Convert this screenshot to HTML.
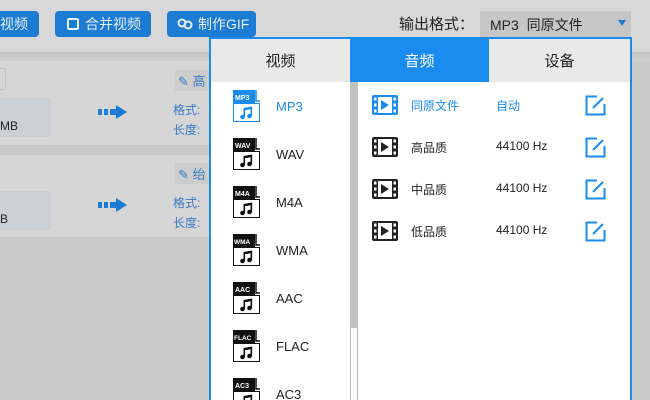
<!DOCTYPE html>
<html><head><meta charset="utf-8"><style>
*{margin:0;padding:0;box-sizing:border-box}
html{width:650px;height:400px;overflow:hidden}
body{width:650px;height:400px;overflow:hidden;position:relative;background:#c9c9c9;font-family:"Liberation Sans","Noto Sans CJK SC",sans-serif}
.a{position:absolute}
.btn{position:absolute;top:11px;height:26px;background:#1c7bd2;border-radius:4px;color:#e6eef8;font-size:14px;line-height:26px}
.lbl{font-size:12px;color:#3a7bc8}
.item{position:absolute;left:22px;width:120px;height:34px}
.item svg{position:absolute;left:0;top:0}
.item span{position:absolute;left:43px;top:9px;font-size:13px;color:#222}
.row{position:absolute;left:149px;width:270px;height:24px;font-size:12px;color:#222}
.row svg{position:absolute}
</style></head><body>
<svg width="0" height="0" style="position:absolute"><defs>
<g id="note"><circle cx="9.5" cy="27" r="2.3"/><circle cx="16.5" cy="26" r="2.3"/><rect x="10.5" y="18" width="1.6" height="9"/><rect x="17.5" y="17" width="1.6" height="9"/><polygon points="10.5,18 19.1,16.5 19.1,19 10.5,20.5"/></g>
</defs></svg>
<!-- top bar -->
<div class="a" style="left:0;top:0;width:650px;height:52px;background:#d8d8d8"></div>
<div class="a" style="left:0;top:52px;width:650px;height:9px;background:linear-gradient(#c2c2c2,#cfcfcf)"></div>
<div class="btn" style="left:-4px;width:43px;padding-left:4px">视频</div>
<div class="btn" style="left:55px;width:96px;padding-left:12px"><span style="display:inline-block;width:12px;height:12px;border:2px solid #e6eef8;border-radius:2px;vertical-align:-1px;margin-right:6px"></span>合并视频</div>
<div class="btn" style="left:167px;width:89px;padding-left:10px"><svg width="16" height="12" style="vertical-align:-1px;margin-right:5px"><circle cx="5" cy="5" r="3.5" fill="none" stroke="#e6eef8" stroke-width="2"/><circle cx="11" cy="7" r="3.5" fill="none" stroke="#e6eef8" stroke-width="2"/></svg>制作GIF</div>
<div class="a" style="left:399px;top:13px;font-size:15px;color:#222">输出格式：</div>
<div class="a" style="left:480px;top:11px;width:151px;height:26px;background:#c6c6c6"></div>
<div class="a" style="left:490px;top:15px;font-size:14px;color:#222">MP3&nbsp; 同原文件</div>
<div class="a" style="left:618px;top:20px;width:0;height:0;border-left:4px solid transparent;border-right:4px solid transparent;border-top:6px solid #1c7bd2"></div>
<!-- rows -->
<div class="a" style="left:0;top:61px;width:215px;height:84px;background:#d6d6d6"></div>
<div class="a" style="left:0;top:145px;width:215px;height:10px;background:#c8c8c8"></div>
<div class="a" style="left:0;top:155px;width:215px;height:82px;background:#d6d6d6"></div>
<div class="a" style="left:-6px;top:68px;width:12px;height:22px;border:1px solid #c4c4c4;border-radius:3px"></div>
<div class="a" style="left:0;top:98px;width:51px;height:39px;background:#cbd0d6"></div>
<div class="a" style="left:0;top:119px;font-size:12px;color:#222">MB</div>
<div class="a" style="left:0;top:191px;width:51px;height:39px;background:#cbd0d6"></div>
<div class="a" style="left:0;top:212px;font-size:12px;color:#222">B</div>
<svg class="a" style="left:97px;top:104px" width="31" height="16"><rect x="1" y="5" width="4" height="6" fill="#1c7bd2"/><rect x="7" y="5" width="4" height="6" fill="#1c7bd2"/><rect x="13" y="5" width="6" height="6" fill="#1c7bd2"/><path d="M19 1 L30 8 L19 15Z" fill="#1c7bd2"/></svg>
<svg class="a" style="left:97px;top:197px" width="31" height="16"><rect x="1" y="5" width="4" height="6" fill="#1c7bd2"/><rect x="7" y="5" width="4" height="6" fill="#1c7bd2"/><rect x="13" y="5" width="6" height="6" fill="#1c7bd2"/><path d="M19 1 L30 8 L19 15Z" fill="#1c7bd2"/></svg>
<div class="a" style="left:175px;top:70px;width:36px;height:21px;background:#cdcdcd"></div>
<div class="a" style="left:178px;top:71px;font-size:13px;color:#3a7bc8">✎ 高</div>
<div class="a lbl" style="left:173px;top:101px">格式:</div>
<div class="a lbl" style="left:173px;top:121px">长度:</div>
<div class="a" style="left:175px;top:163px;width:36px;height:21px;background:#cdcdcd"></div>
<div class="a" style="left:178px;top:164px;font-size:13px;color:#3a7bc8">✎ 绐</div>
<div class="a lbl" style="left:173px;top:194px">格式:</div>
<div class="a lbl" style="left:173px;top:214px">长度:</div>
<!-- popup -->
<div class="a" style="left:209px;top:37px;width:423px;height:370px;border:2px solid #1a8cf0;background:#fff">
 <div class="a" style="left:0;top:0;width:139px;height:43px;background:#e9e9e9;font-size:15px;color:#222;text-align:center;line-height:46px">视频</div>
 <div class="a" style="left:139px;top:0;width:139px;height:43px;background:#1a8cf0;font-size:15px;color:#fff;text-align:center;line-height:46px">音频</div>
 <div class="a" style="left:278px;top:0;width:141px;height:43px;background:#e9e9e9;font-size:15px;color:#222;text-align:center;line-height:46px">设备</div>
 <div class="a" style="left:139px;top:43px;width:8px;height:246px;background:#c2c2c2"></div>
 <div class="a" style="left:139px;top:289px;width:8px;height:80px;border-left:1px solid #bbb;border-right:1px solid #bbb"></div>
 <div class="item" style="top:51px"><svg width="28" height="33"><rect x="0.5" y="13.5" width="26" height="18" fill="#fff" stroke="#1a8cf0"/><rect x="0" y="0" width="22" height="13" fill="#1a8cf0"/><path d="M23 0 v11 h4" fill="none" stroke="#1a8cf0" stroke-width="1.5"/><text x="2" y="10" font-size="7" font-weight="bold" fill="#fff" font-family="Liberation Sans">MP3</text><use href="#note" fill="#1a8cf0"/></svg><span style="color:#1a8cf0">MP3</span></div>
 <div class="item" style="top:99px"><svg width="28" height="33"><rect x="0.5" y="13.5" width="26" height="18" fill="#fff" stroke="#111"/><rect x="0" y="0" width="22" height="13" fill="#111"/><path d="M23 0 v11 h4" fill="none" stroke="#111" stroke-width="1.5"/><text x="2" y="10" font-size="7" font-weight="bold" fill="#fff" font-family="Liberation Sans">WAV</text><use href="#note" fill="#111"/></svg><span>WAV</span></div>
 <div class="item" style="top:147px"><svg width="28" height="33"><rect x="0.5" y="13.5" width="26" height="18" fill="#fff" stroke="#111"/><rect x="0" y="0" width="22" height="13" fill="#111"/><path d="M23 0 v11 h4" fill="none" stroke="#111" stroke-width="1.5"/><text x="2" y="10" font-size="7" font-weight="bold" fill="#fff" font-family="Liberation Sans">M4A</text><use href="#note" fill="#111"/></svg><span>M4A</span></div>
 <div class="item" style="top:195px"><svg width="28" height="33"><rect x="0.5" y="13.5" width="26" height="18" fill="#fff" stroke="#111"/><rect x="0" y="0" width="22" height="13" fill="#111"/><path d="M23 0 v11 h4" fill="none" stroke="#111" stroke-width="1.5"/><text x="1" y="10" font-size="6.5" font-weight="bold" fill="#fff" font-family="Liberation Sans">WMA</text><use href="#note" fill="#111"/></svg><span>WMA</span></div>
 <div class="item" style="top:243px"><svg width="28" height="33"><rect x="0.5" y="13.5" width="26" height="18" fill="#fff" stroke="#111"/><rect x="0" y="0" width="22" height="13" fill="#111"/><path d="M23 0 v11 h4" fill="none" stroke="#111" stroke-width="1.5"/><text x="2" y="10" font-size="7" font-weight="bold" fill="#fff" font-family="Liberation Sans">AAC</text><use href="#note" fill="#111"/></svg><span>AAC</span></div>
 <div class="item" style="top:291px"><svg width="28" height="33"><rect x="0.5" y="13.5" width="26" height="18" fill="#fff" stroke="#111"/><rect x="0" y="0" width="22" height="13" fill="#111"/><path d="M23 0 v11 h4" fill="none" stroke="#111" stroke-width="1.5"/><text x="1" y="10" font-size="6.5" font-weight="bold" fill="#fff" font-family="Liberation Sans">FLAC</text><use href="#note" fill="#111"/></svg><span>FLAC</span></div>
 <div class="item" style="top:339px"><svg width="28" height="33"><rect x="0.5" y="13.5" width="26" height="18" fill="#fff" stroke="#111"/><rect x="0" y="0" width="22" height="13" fill="#111"/><path d="M23 0 v11 h4" fill="none" stroke="#111" stroke-width="1.5"/><text x="2" y="10" font-size="7" font-weight="bold" fill="#fff" font-family="Liberation Sans">AC3</text><use href="#note" fill="#111"/></svg><span>AC3</span></div>
 <!-- right rows -->
 <div class="row" style="top:55px;color:#1a8cf0"><svg style="left:12px;top:1px" width="26" height="20"><rect x="0" y="0" width="26" height="20" rx="2" fill="#1a8cf0"/><rect x="6" y="2" width="14" height="16" fill="#fff"/><rect x="2" y="2.5" width="2.5" height="3" fill="#fff"/><rect x="2" y="8.5" width="2.5" height="3" fill="#fff"/><rect x="2" y="14.5" width="2.5" height="3" fill="#fff"/><rect x="21.5" y="2.5" width="2.5" height="3" fill="#fff"/><rect x="21.5" y="8.5" width="2.5" height="3" fill="#fff"/><rect x="21.5" y="14.5" width="2.5" height="3" fill="#fff"/><path d="M9 5 L17 10 L9 15Z" fill="#1a8cf0"/></svg><span class="a" style="left:51px;top:3px">同原文件</span><span class="a" style="left:136px;top:3px">自动</span><svg style="left:225px;top:1px" width="21" height="21"><path d="M12 1.5 H1.5 V19.5 H19.5 V9" fill="none" stroke="#1a8cf0" stroke-width="2"/><path d="M8 13 L18 3" stroke="#1a8cf0" stroke-width="2"/></svg></div>
 <div class="row" style="top:97px"><svg style="left:12px;top:1px" width="26" height="20"><rect x="0" y="0" width="26" height="20" rx="2" fill="#222"/><rect x="6" y="2" width="14" height="16" fill="#fff"/><rect x="2" y="2.5" width="2.5" height="3" fill="#fff"/><rect x="2" y="8.5" width="2.5" height="3" fill="#fff"/><rect x="2" y="14.5" width="2.5" height="3" fill="#fff"/><rect x="21.5" y="2.5" width="2.5" height="3" fill="#fff"/><rect x="21.5" y="8.5" width="2.5" height="3" fill="#fff"/><rect x="21.5" y="14.5" width="2.5" height="3" fill="#fff"/><path d="M9 5 L17 10 L9 15Z" fill="#222"/></svg><span class="a" style="left:51px;top:3px">高品质</span><span class="a" style="left:136px;top:3px">44100 Hz</span><svg style="left:225px;top:1px" width="21" height="21"><path d="M12 1.5 H1.5 V19.5 H19.5 V9" fill="none" stroke="#1a8cf0" stroke-width="2"/><path d="M8 13 L18 3" stroke="#1a8cf0" stroke-width="2"/></svg></div>
 <div class="row" style="top:139px"><svg style="left:12px;top:1px" width="26" height="20"><rect x="0" y="0" width="26" height="20" rx="2" fill="#222"/><rect x="6" y="2" width="14" height="16" fill="#fff"/><rect x="2" y="2.5" width="2.5" height="3" fill="#fff"/><rect x="2" y="8.5" width="2.5" height="3" fill="#fff"/><rect x="2" y="14.5" width="2.5" height="3" fill="#fff"/><rect x="21.5" y="2.5" width="2.5" height="3" fill="#fff"/><rect x="21.5" y="8.5" width="2.5" height="3" fill="#fff"/><rect x="21.5" y="14.5" width="2.5" height="3" fill="#fff"/><path d="M9 5 L17 10 L9 15Z" fill="#222"/></svg><span class="a" style="left:51px;top:3px">中品质</span><span class="a" style="left:136px;top:3px">44100 Hz</span><svg style="left:225px;top:1px" width="21" height="21"><path d="M12 1.5 H1.5 V19.5 H19.5 V9" fill="none" stroke="#1a8cf0" stroke-width="2"/><path d="M8 13 L18 3" stroke="#1a8cf0" stroke-width="2"/></svg></div>
 <div class="row" style="top:181px"><svg style="left:12px;top:1px" width="26" height="20"><rect x="0" y="0" width="26" height="20" rx="2" fill="#222"/><rect x="6" y="2" width="14" height="16" fill="#fff"/><rect x="2" y="2.5" width="2.5" height="3" fill="#fff"/><rect x="2" y="8.5" width="2.5" height="3" fill="#fff"/><rect x="2" y="14.5" width="2.5" height="3" fill="#fff"/><rect x="21.5" y="2.5" width="2.5" height="3" fill="#fff"/><rect x="21.5" y="8.5" width="2.5" height="3" fill="#fff"/><rect x="21.5" y="14.5" width="2.5" height="3" fill="#fff"/><path d="M9 5 L17 10 L9 15Z" fill="#222"/></svg><span class="a" style="left:51px;top:3px">低品质</span><span class="a" style="left:136px;top:3px">44100 Hz</span><svg style="left:225px;top:1px" width="21" height="21"><path d="M12 1.5 H1.5 V19.5 H19.5 V9" fill="none" stroke="#1a8cf0" stroke-width="2"/><path d="M8 13 L18 3" stroke="#1a8cf0" stroke-width="2"/></svg></div>
</div>
</body></html>
